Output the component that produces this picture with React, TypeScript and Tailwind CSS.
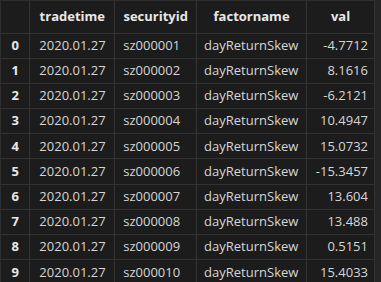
import React from "react";

const rows = [
  ["2020.01.27", "sz000001", "dayReturnSkew", "-4.7712"],
  ["2020.01.27", "sz000002", "dayReturnSkew", "8.1616"],
  ["2020.01.27", "sz000003", "dayReturnSkew", "-6.2121"],
  ["2020.01.27", "sz000004", "dayReturnSkew", "10.4947"],
  ["2020.01.27", "sz000005", "dayReturnSkew", "15.0732"],
  ["2020.01.27", "sz000006", "dayReturnSkew", "-15.3457"],
  ["2020.01.27", "sz000007", "dayReturnSkew", "13.604"],
  ["2020.01.27", "sz000008", "dayReturnSkew", "13.488"],
  ["2020.01.27", "sz000009", "dayReturnSkew", "0.5151"],
  ["2020.01.27", "sz000010", "dayReturnSkew", "15.4033"],
];

export default function App() {
  return (
    <div
      className="w-[381px] h-[282px] overflow-hidden bg-[#262626] flex"
      style={{ fontFamily: '"Open Sans", "Noto Sans", sans-serif' }}
    >
      <div className="w-[375px] h-full bg-[#1c1c1c] border-l border-t border-[#2e2e2e]">
        <table className="border-collapse text-[13px] text-[#d6d6d6]">
          <thead>
            <tr className="h-[32px]">
              <th className="w-[29px] border-r border-b border-[#333333]"></th>
              <th className="w-[85px] border-r border-b border-[#333333] font-bold text-[#e8e8e8] text-center">tradetime</th>
              <th className="w-[82px] border-r border-b border-[#333333] font-bold text-[#e8e8e8] text-center">securityid</th>
              <th className="w-[110px] border-r border-b border-[#333333] font-bold text-[#e8e8e8] text-center">factorname</th>
              <th className="w-[68px] border-r border-b border-[#333333] font-bold text-[#e8e8e8] text-center">val</th>
            </tr>
          </thead>
          <tbody>
            {rows.map((r, i) => (
              <tr key={i} className="h-[25.2px]">
                <td className="border-r border-b border-[#333333] font-bold text-[#e8e8e8] text-center">{i}</td>
                <td className="border-r border-b border-[#333333] pl-[9px]">{r[0]}</td>
                <td className="border-r border-b border-[#333333] pl-[8px]">{r[1]}</td>
                <td className="border-r border-b border-[#333333] pl-[7px]">{r[2]}</td>
                <td className="border-r border-b border-[#333333] pr-[6px] text-right">{r[3]}</td>
              </tr>
            ))}
          </tbody>
        </table>
      </div>
    </div>
  );
}
